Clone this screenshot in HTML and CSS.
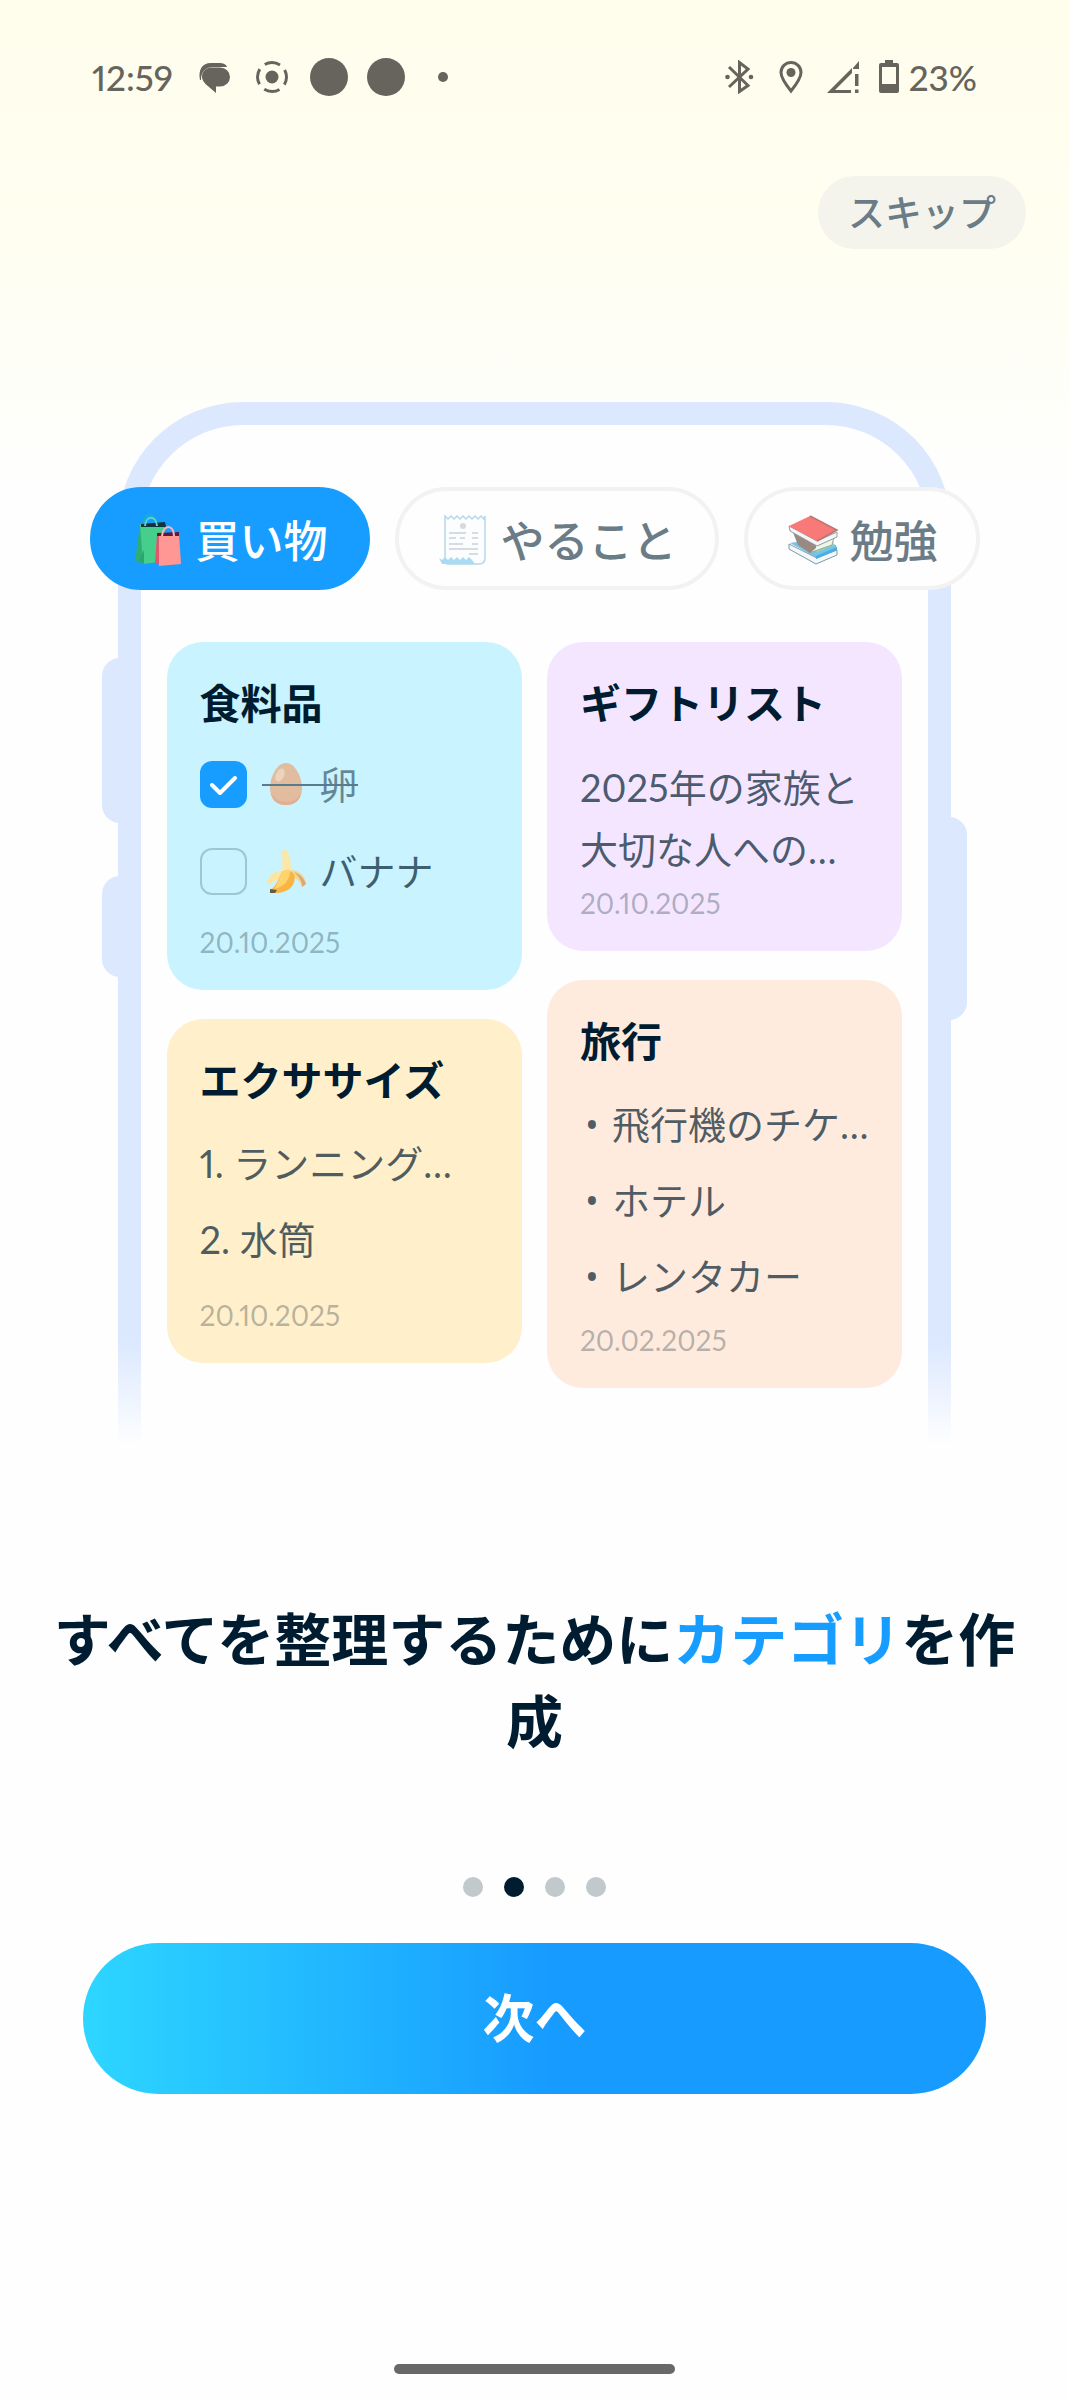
FILE: index.html
```html
<!DOCTYPE html>
<html lang="ja">
<head>
    <meta charset="UTF-8">
    <meta name="viewport" content="width=device-width, initial-scale=1.0">
    <title>カテゴリを作成</title>
    <link rel="stylesheet" href="styles.css">
</head>
<body>
<header class="status-bar">
    <div class="status-left">
        <span class="time">12:59</span>
        <svg class="status-icon" viewBox="0 0 38 38">
            <path d="M4 22C2 12 6 5 15 5h8c4 0 7 1 8 4H18C10 9 5 13 5 22z"/>
            <path d="M16 9.500h8a10 9.500 0 0 1 0 19h-4V35l-7-6C8 25 6 22 6 18.500c0-5 4-9 10-9z"/>
        </svg>
        <svg class="status-icon" viewBox="0 0 38 38">
            <circle cx="19" cy="19" r="6.500"/>
            <circle class="line" cx="19" cy="19" r="14.500" stroke-dasharray="16 6.780" stroke-dashoffset="8"/>
        </svg>
        <svg class="status-icon" viewBox="0 0 38 38"><circle cx="19" cy="19" r="19"/></svg>
        <svg class="status-icon" viewBox="0 0 38 38"><circle cx="19" cy="19" r="19"/></svg>
        <svg class="status-icon" viewBox="0 0 38 38"><circle cx="19" cy="19" r="5"/></svg>
    </div>
    <div class="status-right">
        <svg class="status-icon-small" viewBox="0 0 32 34">
            <path class="line" d="M6 7l19 18.500-8.500 6V2.500L25 9 6 27"/>
            <circle cx="4.500" cy="17" r="2.300"/>
            <circle cx="28" cy="17" r="2.300"/>
        </svg>
        <svg class="status-icon-small" viewBox="0 0 32 34">
            <path class="line" d="M16 31C10 23.500 6 18 6 12.500a10 10 0 0 1 20 0C26 18 22 23.500 16 31z"/>
            <circle cx="16" cy="12.500" r="4.500"/>
        </svg>
        <svg class="status-icon-small" viewBox="0 0 32 34">
            <path d="M0 33L25 8v5L8 30h16v3zM26 8l6-7v8h-6zM28 14h3.500v12H28zM28 29.500h3.500V33H28z"/>
        </svg>
        <div class="battery">
            <svg class="battery-icon" viewBox="0 0 20 34">
                <path fill-rule="evenodd" d="M6 0h8v3h4a2 2 0 0 1 2 2v26a2 2 0 0 1-2 2H2a2 2 0 0 1-2-2V5a2 2 0 0 1 2-2h4zM3 7v17h14V7z"/>
            </svg>
            <span>23%</span>
        </div>
    </div>
</header>

<main>
    <button class="skip-button" type="button">スキップ</button>

    <section class="preview">
        <div class="phone-frame">
            <div class="phone-body"></div>
            <div class="side-key key-volume"></div>
            <div class="side-key key-mute"></div>
            <div class="side-key key-power"></div>
        </div>

        <nav class="tabs">
            <button class="tab active" type="button">
                <svg class="tab-icon" viewBox="0 0 54 54">
                    <path fill="none" stroke="#14b3c4" stroke-width="2" d="M11 14C12 0 23 0 25 13"/>
                    <path fill="#2fae74" d="M8 13l-5 36 6 2 4-37z"/>
                    <path fill="#45cf8b" d="M8 12h24l4 37-25 3z"/>
                    <path fill="#12343c" d="M9 12l24-2 1 5H9z"/>
                    <path fill="#2ba76e" d="M7 48l5-10 0 14z"/>
                    <path fill="none" stroke="#5fd3c4" stroke-width="2" d="M13 14C14 3 24 3 25 14"/>
                    <path fill="#e2566b" d="M25 23l-2 28 5 2 3-30z"/>
                    <path fill="#ff9795" d="M27 22h20l2 30-22 2z"/>
                    <path fill="#5d1b38" d="M25 21l22-1v4H25z"/>
                    <path fill="none" stroke="#f7b2c5" stroke-width="2" d="M30 24C31 12 42 12 42 24"/>
                </svg>
                買い物
            </button>
            <button class="tab" type="button">
                <svg class="tab-icon" viewBox="0 0 54 54">
                    <path fill="#fbfdff" stroke="#b5d7ea" stroke-width="1.500" d="M8 4l3 3 3-3 3 3 3-3 3 3 3-3 3 3 3-3 3 3 3-3 3 3 3-3 3 3 1-3v42q0 6-6 6H10l-2-4z"/>
                    <path fill="#a9dcf2" d="M2 46l3 2 3-3 3 3 3-3 3 3 3-3 3 3 3-3 3 3 3-3 3 3 3 4H5z"/>
                    <circle cx="26" cy="14" r="3" fill="#d5dadd"/>
                    <path fill="none" stroke="#ccd1d6" stroke-width="1.500" d="M12 21h17M35 21h6M12 26h7M23 26h5M35 26h6M12 32h14M35 32h6M12 37h29M32 42h9"/>
                </svg>
                やること
            </button>
            <button class="tab" type="button">
                <svg class="tab-icon" viewBox="0 0 54 54">
                    <path fill="#6fc5ee" d="M4 31l27 15 20-9-1-4-20-6z"/>
                    <path fill="#f4f8fb" stroke="#7d99aa" stroke-width="1" d="M3 32l28 14 20-8v5L30 52 3 37z"/>
                    <path fill="#49aee0" d="M30 44l21-9v3l-21 9z"/>
                    <path fill="#a5d6a2" d="M8 22l23 18 17-7-2-9z"/>
                    <path fill="#eef6e4" stroke="#96aa90" stroke-width="1" d="M22 35l26-10-2 8-23 8z"/>
                    <path fill="#9b8880" d="M6 18l24 13v5l-6 5-12-8z"/>
                    <path fill="#f4f5f6" stroke="#929da4" stroke-width="1" d="M3 14l28 15 20-9v5l-20 9L4 19z"/>
                    <path fill="#f97978" d="M3 14L24 4l27 14-20 11z"/>
                    <path fill="none" stroke="#b57674" stroke-width="1.500" d="M24 4l27 14-20 11"/>
                </svg>
                勉強
            </button>
        </nav>

        <div class="notes">
            <div class="notes-column">
                <article class="note note-blue">
                    <h2>食料品</h2>
                    <div class="checks">
                        <div class="check-row done">
                            <input id="egg" type="checkbox" checked>
                            <label for="egg">
                                <svg class="food-icon" viewBox="0 0 48 48">
                                    <path fill="#e1bc9f" d="M24 3C15 3 8 17 8 28c0 11 7 17 16 17s16-6 16-17C40 17 33 3 24 3z"/>
                                    <ellipse cx="18" cy="15" rx="4" ry="7" transform="rotate(25 18 15)" fill="#edd3bc"/>
                                    <path fill="#e0ae91" d="M9 33c3 6 9 9 15 9s12-3 15-9c-1 8-7 12-15 12S10 41 9 33z"/>
                                </svg>
                                卵
                            </label>
                        </div>
                        <div class="check-row">
                            <input id="banana" type="checkbox">
                            <label for="banana">
                                <svg class="food-icon" viewBox="0 0 48 48">
                                    <path fill="#f9e7ac" d="M19 4l6-1c4 8 5 16 3 27H18c3-9 3-18 1-26z"/>
                                    <path fill="#f6d98d" d="M29 23c8 0 14 5 15 14l-4 3c-2-7-6-9-12-9z"/>
                                    <path fill="#dba87a" d="M32 25c6 2 10 6 12 12l-4 3c0-6-3-10-8-15z"/>
                                    <path fill="#fae5a3" d="M20 24C12 24 7 28 5 36l3 2c3-4 7-6 12-6z"/>
                                    <path fill="#f9b544" d="M20 25c4-3 9-2 12 2 3 11-5 20-22 19l-2-3c6-3 8-10 12-18z"/>
                                    <path fill="#fdd36c" d="M20 25c3-2 6-2 8-1 0 9-6 16-16 18 4-5 5-11 8-17z"/>
                                    <path fill="#675b43" d="M8 42l7 1-2 3-5 0z"/>
                                </svg>
                                バナナ
                            </label>
                        </div>
                    </div>
                    <time class="date date-checks">20.10.2025</time>
                </article>

                <article class="note note-yellow">
                    <h2>エクササイズ</h2>
                    <ul>
                        <li>1. ランニング…</li>
                        <li>2. 水筒</li>
                    </ul>
                    <time class="date date-steps">20.10.2025</time>
                </article>
            </div>

            <div class="notes-column">
                <article class="note note-purple">
                    <h2>ギフトリスト</h2>
                    <p>2025年の家族と<br>大切な人への…</p>
                    <time class="date">20.10.2025</time>
                </article>

                <article class="note note-orange">
                    <h2>旅行</h2>
                    <ul>
                        <li><span class="bullet">•</span>飛行機のチケ…</li>
                        <li><span class="bullet">•</span>ホテル</li>
                        <li><span class="bullet">•</span>レンタカー</li>
                    </ul>
                    <time class="date date-list">20.02.2025</time>
                </article>
            </div>
        </div>
    </section>

    <h1>すべてを整理するために<span class="highlight">カテゴリ</span>を作成</h1>

    <div class="dots">
        <span class="dot"></span>
        <span class="dot current"></span>
        <span class="dot"></span>
        <span class="dot"></span>
    </div>

    <button class="next-button" type="button">次へ</button>
</main>

<div class="home-handle"></div>
</body>
</html>
```

FILE: styles.css
```css
* {
    box-sizing: border-box;
}

body {
    margin: 0;
    min-height: 100vh;
    display: flex;
    flex-direction: column;
    font-family: Lato, "Noto Sans CJK JP", sans-serif;
    font-variant-numeric: proportional-nums;
    color: #001c30;
    background: #fefefe linear-gradient(#fffdec 0, #fffef0 220px, #fefefe 480px) no-repeat;
}

button {
    border: none;
    font-family: inherit;
    cursor: pointer;
}

h1, h2, p, ul {
    margin: 0;
    padding: 0;
}

/* status bar */
.status-bar {
    display: flex;
    justify-content: space-between;
    align-items: center;
    padding: 58px 92px 0;
    font-size: 35px;
    line-height: 38px;
    font-weight: 500;
    color: #66645c;
}

.status-left {
    display: flex;
    align-items: center;
    gap: 19px;
}

.time {
    margin-right: 4px;
}

.status-right {
    display: flex;
    align-items: center;
    gap: 20px;
}

.status-bar svg {
    fill: #66645c;
}

.status-bar .line {
    fill: none;
    stroke: #66645c;
    stroke-width: 3;
}

.status-icon {
    width: 38px;
    height: 38px;
}

.status-icon-small {
    width: 32px;
    height: 34px;
}

.battery {
    display: flex;
    align-items: center;
    gap: 10px;
}

.battery-icon {
    width: 20px;
    height: 34px;
}

main {
    display: flex;
    flex-direction: column;
    align-items: center;
}

.skip-button {
    align-self: flex-end;
    margin: 80px 43px 0 0;
    padding: 0 30px;
    border-radius: 37px;
    background-color: #f4f4ed;
    color: #6b7c86;
    font-size: 37px;
    line-height: 73px;
    font-weight: 500;
}

/* phone preview */
.preview {
    position: relative;
    width: 78%;
    margin-top: 153px;
    padding: 85px 49px 63px;
}

/* wider than the phone so that the side keys are kept by the mask */
.phone-frame {
    position: absolute;
    inset: 0 -16px;
    padding: 0 16px;
    -webkit-mask-image: linear-gradient(#000 calc(100% - 110px), transparent calc(100% - 6px));
    mask-image: linear-gradient(#000 calc(100% - 110px), transparent calc(100% - 6px));
}

.phone-body {
    position: relative;
    z-index: 1;
    height: 100%;
    border: 23px solid #dbe8fe;
    border-bottom: none;
    border-radius: 125px 125px 0 0;
    background-color: #fefefe;
}

.side-key {
    position: absolute;
    width: 36px;
    border-radius: 18px;
    background-color: #dbe8fe;
}

.key-volume {
    left: 0;
    top: 256px;
    height: 165px;
}

.key-mute {
    left: 0;
    top: 474px;
    height: 101px;
}

.key-power {
    right: 0;
    top: 415px;
    height: 203px;
}

.tabs {
    position: relative;
    display: flex;
    justify-content: center;
    gap: 25px;
    margin: 0 -80px;
}

.tab {
    display: flex;
    align-items: center;
    gap: 10px;
    height: 103px;
    padding: 0 38px;
    border: 4px solid #f2f2f3;
    border-radius: 52px;
    background-color: #fefefe;
    color: #6b7c86;
    font-size: 44px;
    font-weight: 500;
    white-space: nowrap;
}

.tab.active {
    border-color: #179dff;
    background-color: #179dff;
    color: #fff;
}

.tab-icon {
    width: 54px;
    height: 54px;
}

.notes {
    position: relative;
    display: grid;
    grid-template-columns: 1fr 1fr;
    gap: 25px;
    margin-top: 52px;
}

.notes-column {
    display: flex;
    flex-direction: column;
    align-items: stretch;
    gap: 29px;
}

.note {
    padding: 32px 0 30px 33px;
    border-radius: 36px;
    color: rgba(0, 28, 48, 0.7);
    font-size: 38px;
    white-space: nowrap;
}

.note h2 {
    margin-bottom: 22px;
    color: #001c30;
    font-size: 41px;
    line-height: 60px;
    font-weight: 700;
}

.note p {
    line-height: 62px;
}

.note ul {
    display: flex;
    flex-direction: column;
    gap: 16px;
    list-style-type: none;
    line-height: 60px;
}

.bullet {
    display: inline-block;
    width: 24px;
    margin-right: 8px;
    font-family: "Open Sans", sans-serif;
    text-align: center;
}

.note-blue {
    background-color: #c9f3ff;
}

.note-yellow {
    background-color: #ffefca;
}

.note-purple {
    background-color: #f4e6ff;
}

.note-orange {
    background-color: #ffebdd;
}

.date {
    display: block;
    margin-top: 5px;
    color: rgba(0, 28, 48, 0.3);
    font-size: 28px;
    line-height: 36px;
}

.date-checks {
    margin-top: 25px;
}

.date-steps {
    margin-top: 28px;
}

.date-list {
    margin-top: 16px;
}

.checks {
    display: flex;
    flex-direction: column;
    gap: 31px;
}

.check-row {
    display: flex;
    align-items: center;
    gap: 15px;
    line-height: 56px;
}

.check-row input {
    appearance: none;
    width: 47px;
    height: 47px;
    margin: 0;
    border: 2px solid #a0c6d6;
    border-radius: 12px;
}

.check-row input:checked {
    border-color: #179dff;
    background: #179dff url("data:image/svg+xml,%3Csvg xmlns='http://www.w3.org/2000/svg' viewBox='0 0 43 43'%3E%3Cpath d='M10 22l8 8 15-15' fill='none' stroke='white' stroke-width='4' stroke-linecap='round' stroke-linejoin='round'/%3E%3C/svg%3E") center no-repeat;
}

.check-row label {
    position: relative;
    display: flex;
    align-items: center;
    gap: 10px;
}

.done label {
    color: rgba(0, 28, 48, 0.5);
}

/* strike line runs over the icon as well as the text */
.done label::after {
    content: "";
    position: absolute;
    left: 0;
    right: 0;
    top: 50%;
    height: 2px;
    background-color: #587c8c;
}

.food-icon {
    width: 48px;
    height: 48px;
}

h1 {
    margin-top: 147px;
    padding: 0 32px;
    font-size: 57px;
    line-height: 82px;
    font-weight: 700;
    text-align: center;
}

.highlight {
    color: #179dff;
}

.dots {
    display: flex;
    gap: 21px;
    margin-top: 115px;
}

.dot {
    width: 20px;
    height: 20px;
    border-radius: 50%;
    background-color: #c1c9cc;
}

.dot.current {
    background-color: #001c30;
}

.next-button {
    align-self: stretch;
    margin: 46px 83px 0;
    padding: 0;
    border-radius: 76px;
    background: linear-gradient(90deg, #2dd6ff, #179bff 52%);
    color: #fff;
    font-size: 52px;
    line-height: 151px;
    font-weight: 700;
}

.home-handle {
    align-self: center;
    width: 281px;
    height: 10px;
    margin: auto 0 26px;
    border-radius: 5px;
    background-color: #686868;
}
```
